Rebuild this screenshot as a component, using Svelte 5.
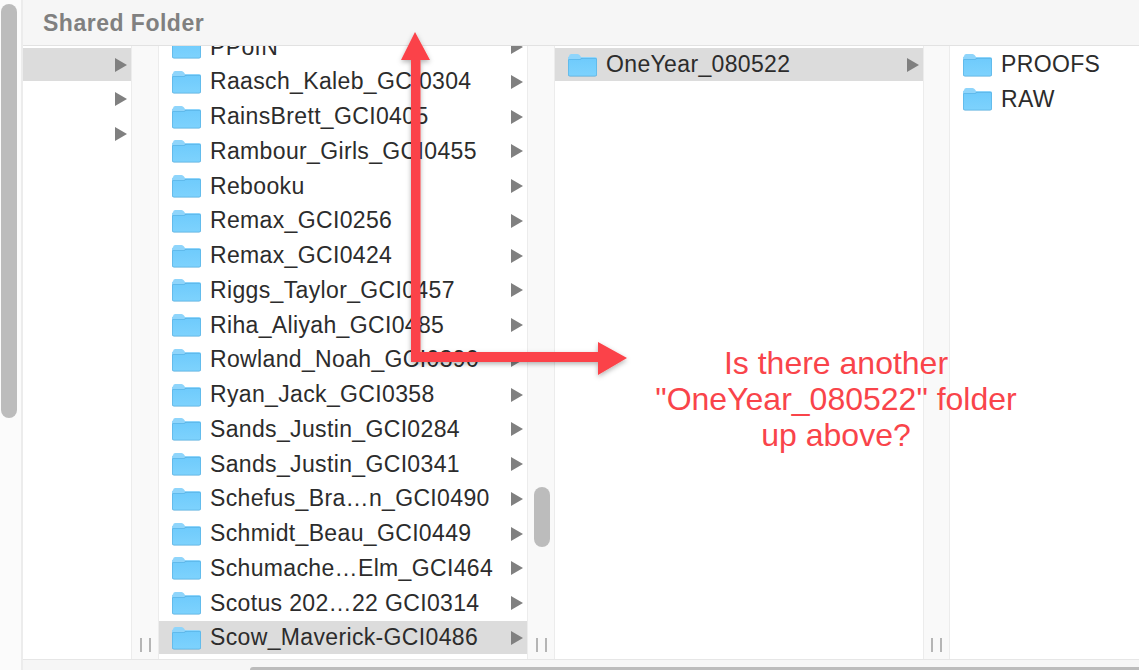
<script lang="ts">
	const left = [{ selected: true }, { selected: false }, { selected: false }];

	const folders = [
		'PPofN',
		'Raasch_Kaleb_GCI0304',
		'RainsBrett_GCI0405',
		'Rambour_Girls_GCI0455',
		'Rebooku',
		'Remax_GCI0256',
		'Remax_GCI0424',
		'Riggs_Taylor_GCI0457',
		'Riha_Aliyah_GCI0485',
		'Rowland_Noah_GCI0390',
		'Ryan_Jack_GCI0358',
		'Sands_Justin_GCI0284',
		'Sands_Justin_GCI0341',
		'Schefus_Bra…n_GCI0490',
		'Schmidt_Beau_GCI0449',
		'Schumache…Elm_GCI464',
		'Scotus 202…22 GCI0314',
		'Scow_Maverick-GCI0486'
	];
</script>

{#snippet folder()}
	<svg class="folder" viewBox="0 0 29 24" aria-hidden="true">
		<path d="M1 3.5Q1 1 3 1H9.5Q11 1 12 2.5L13 4H27Q29 4 29 6V10H0V4Z" fill="#8fd5fb" />
		<path d="M0 7.5Q0 6 1.5 6H12L14 5H27.5Q29 5 29 6.5V21.5Q29 23.5 27 23.5H2Q0 23.5 0 21.5Z" fill="#4fa9dc" />
		<path d="M0.5 7.5Q0.5 6.5 1.5 6.5H12.5L14.5 5.6H27.5Q28.5 5.6 28.5 6.6V21.5Q28.5 22.7 27 22.7H2Q0.5 22.7 0.5 21.5Z" fill="url(#folderFill)" />
	</svg>
{/snippet}

{#snippet chevron()}
	<svg class="chevron" viewBox="0 0 12 14" aria-hidden="true"><path d="M0 0L12 7L0 14Z" /></svg>
{/snippet}

{#snippet handle()}
	<div class="handle"><i></i><i></i></div>
{/snippet}

<svg class="defs" width="0" height="0" aria-hidden="true">
	<defs>
		<linearGradient id="folderFill" x1="0" x2="0" y1="0" y2="1">
			<stop offset="0%" stop-color="#6fcbfc" />
			<stop offset="100%" stop-color="#7dd2fd" />
		</linearGradient>
	</defs>
</svg>

<div class="window">
	<div class="rail"><div class="thumb"></div></div>
	<div class="main">
		<header>Shared Folder</header>
		<div class="browser">
			<section class="col first">
				<div class="list">
					{#each left as item}
						<div class="row" class:selected={item.selected}>{@render chevron()}</div>
					{/each}
				</div>
			</section>
			<div class="gutter">{@render handle()}</div>

			<section class="col wide">
				<div class="list scrolled">
					{#each folders as name, i}
						<div class="row" class:selected={i === folders.length - 1}>
							{@render folder()}
							<span class="name">{name}</span>
							{@render chevron()}
						</div>
					{/each}
				</div>
			</section>
			<div class="gutter">
				<div class="vthumb"></div>
				{@render handle()}
			</div>

			<section class="col wide">
				<div class="list">
					<div class="row selected">
						{@render folder()}
						<span class="name">OneYear_080522</span>
						{@render chevron()}
					</div>
				</div>
			</section>
			<div class="gutter narrow">{@render handle()}</div>

			<section class="col last">
				<div class="list">
					<div class="row">{@render folder()}<span class="name">PROOFS</span></div>
					<div class="row">{@render folder()}<span class="name">RAW</span></div>
				</div>
			</section>
		</div>
		<footer><div class="hthumb"></div></footer>
	</div>

	<svg class="arrows" viewBox="0 0 1139 670" aria-hidden="true">
		<defs>
			<filter id="arrowShadow" x="-10%" y="-10%" width="120%" height="120%">
				<feDropShadow dx="0" dy="2" stdDeviation="2.5" flood-color="#000" flood-opacity="0.3" />
			</filter>
		</defs>
		<path
			d="M415 32L430 60H420.500V352H598V342L627 358L598 375V362H411V60H401Z"
			fill="#fb4248"
			filter="url(#arrowShadow)"
		/>
	</svg>

	<p class="note">Is there another<br />"OneYear_080522" folder<br />up above?</p>
</div>

<style>
	:global(body) {
		margin: 0;
	}
	.defs {
		position: absolute;
	}
	.window {
		position: relative;
		display: flex;
		width: 1139px;
		height: 670px;
		overflow: hidden;
		background: #fff;
		font-family: 'Liberation Sans', Arial, sans-serif;
	}
	.rail {
		flex: 0 0 20px;
		background: #fbfbfb;
		border-right: 2px solid #ececec;
		padding: 4px 0 0 1px;
		box-sizing: content-box;
	}
	.thumb {
		width: 16px;
		height: 414px;
		border-radius: 8px;
		background: #bcbcbc;
	}
	.main {
		flex: 1;
		min-width: 0;
		display: flex;
		flex-direction: column;
	}
	header {
		flex: 0 0 46px;
		box-sizing: border-box;
		padding: 10px 0 0 20px;
		background: #f6f6f6;
		border-bottom: 1.5px solid #e2e2e2;
		color: #808080;
		font-size: 23px;
		font-weight: 700;
		letter-spacing: 0.5px;
		line-height: 27px;
	}
	.browser {
		flex: 1;
		min-height: 0;
		display: flex;
	}
	.col {
		overflow: hidden;
		padding-top: 2px;
	}
	.first {
		flex: 0 0 108px;
	}
	.wide {
		flex: 0 0 368px;
	}
	.last {
		flex: 1;
		min-width: 0;
	}
	.list.scrolled {
		margin-top: -17.4px;
	}
	.row {
		display: flex;
		align-items: center;
		height: 33px;
		margin-bottom: 1.75px;
		padding: 0 4px 0 13px;
		color: #2c2c2c;
		font-size: 23px;
		letter-spacing: 0.35px;
		white-space: nowrap;
	}
	.first .row {
		justify-content: flex-end;
	}
	.selected {
		background: #dcdcdc;
	}
	.folder {
		flex: 0 0 29px;
		width: 29px;
		height: 24px;
		margin-right: 9px;
	}
	.name {
		flex: 1;
		min-width: 0;
	}
	.chevron {
		flex: 0 0 12px;
		width: 12px;
		height: 14px;
		fill: #808080;
	}
	.gutter {
		position: relative;
		flex: 0 0 26px;
		display: flex;
		justify-content: center;
		align-items: flex-end;
		padding-bottom: 7px;
		background: #f9f9f9;
		border-left: 1px solid #ececec;
		border-right: 1px solid #ececec;
	}
	.gutter.narrow {
		flex-basis: 25px;
	}
	.handle {
		display: flex;
		gap: 7px;
	}
	.handle i {
		display: block;
		width: 2px;
		height: 14px;
		background: #b5b5b5;
	}
	.vthumb {
		position: absolute;
		left: 6px;
		top: 441px;
		width: 16px;
		height: 60px;
		border-radius: 8px;
		background: #bcbcbc;
	}
	footer {
		flex: 0 0 11px;
		box-sizing: border-box;
		padding: 7px 0 0 227px;
		background: #f6f6f6;
		border-top: 1px solid #e6e6e6;
	}
	.hthumb {
		height: 3px;
		border-radius: 6px 0 0 0;
		background: #bcbcbc;
	}
	.arrows {
		position: absolute;
		inset: 0;
		width: 100%;
		height: 100%;
		pointer-events: none;
	}
	.note {
		position: absolute;
		left: 636px;
		top: 345px;
		width: 400px;
		margin: 0;
		color: #f9444a;
		font-size: 32px;
		line-height: 36px;
		text-align: center;
	}
</style>
